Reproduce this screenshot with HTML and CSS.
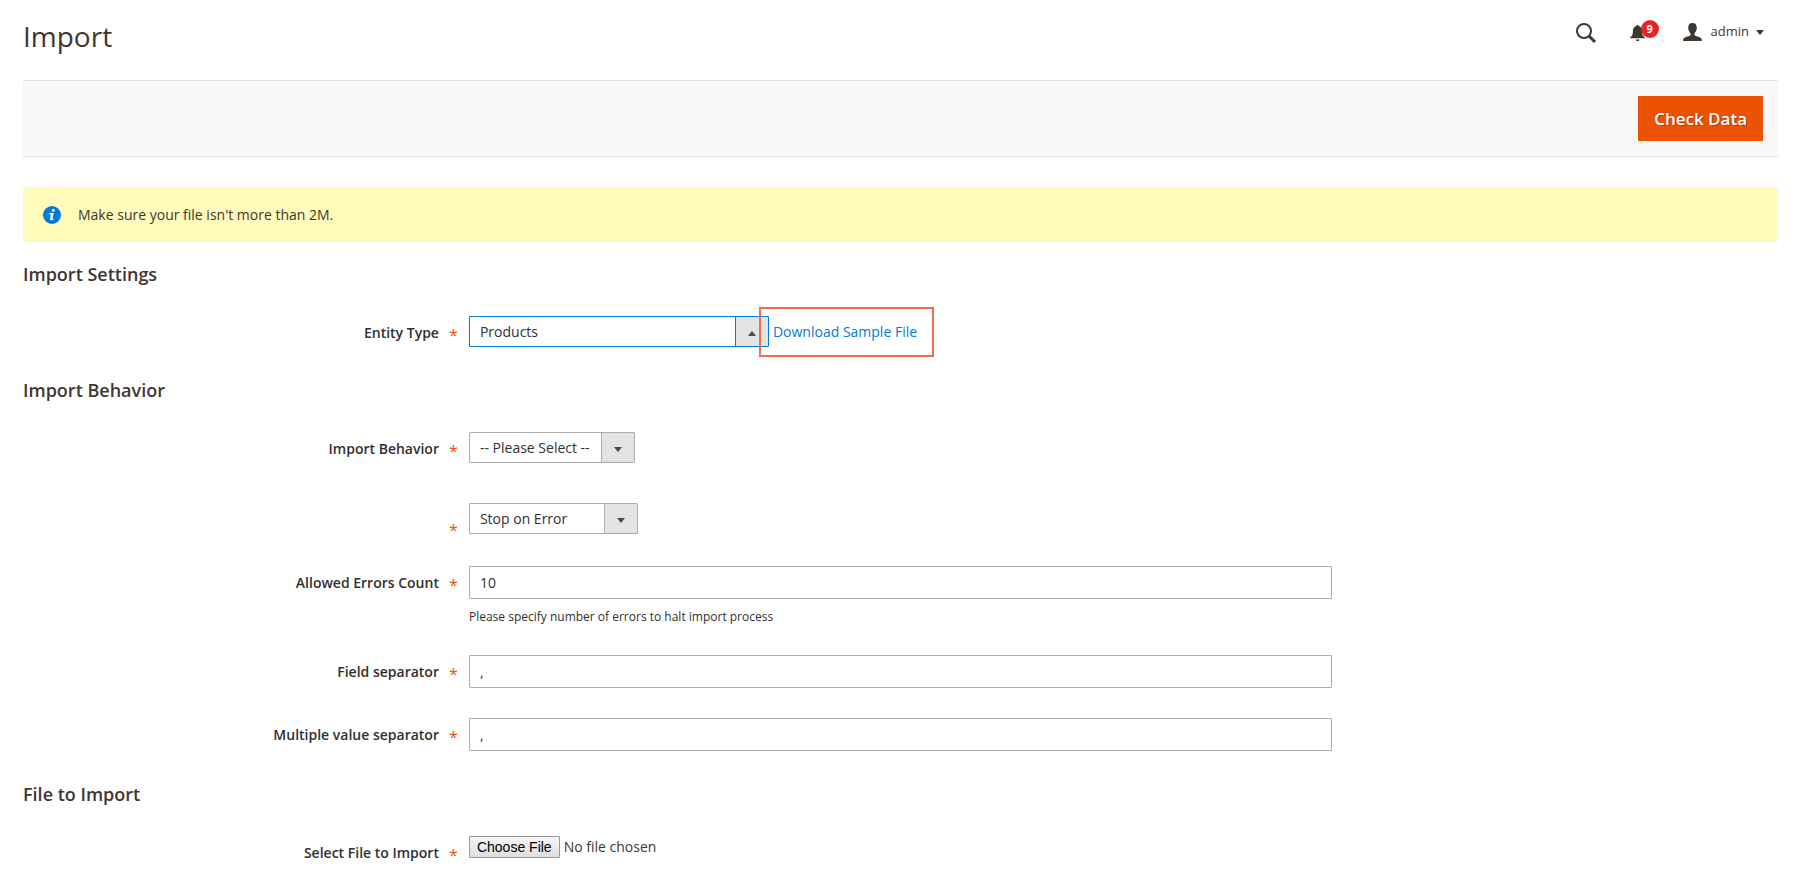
FILE: index.html
```html
<!DOCTYPE html>
<html lang="en">
<head>
<meta charset="utf-8">
<title>Import</title>
<link rel="stylesheet" href="styles.css">
</head>
<body>
<div class="page">
  <header class="page-header">
    <h1 class="page-title">Import</h1>
    <div class="header-tools">
      <button class="tool tool-search" type="button" aria-label="Search">
        <svg width="22" height="22" viewBox="0 0 22 22"><circle cx="9" cy="9" r="7" fill="none" stroke="currentColor" stroke-width="2"/><path d="M14 14l6 6" stroke="currentColor" stroke-width="3" fill="none"/></svg>
      </button>
      <button class="tool tool-bell" type="button" aria-label="Notifications">
        <svg width="16" height="18" viewBox="0 0 16 18"><path fill="currentColor" d="M6.500 1h2v1c2.300.5 3.600 2.300 3.600 4.800 0 3.800.7 5.400 2.700 6.400v1H.2v-1c2-1 2.700-2.600 2.700-6.400C2.900 4.300 4.200 2.500 6.500 2zM5.800 15.500h3.600c0 1-.8 1.700-1.800 1.700s-1.800-.7-1.800-1.700z"/></svg>
        <span class="badge">9</span>
      </button>
      <button class="tool tool-user" type="button">
        <svg width="19" height="18" viewBox="0 0 19 18"><path fill="currentColor" d="M9.500 0c2.700 0 4.200 1.500 4.200 4.200 0 .6.100 1.100.1 1.600 0 .9-.5 1.500-.8 2-.3 1.300-.9 2.100-1.500 2.700v1.400c.3.700 1.400 1 3 1.500 2.300.7 4.200 1.300 4.300 3.200V18H.2v-1.400c.1-1.900 2-2.500 4.300-3.200 1.600-.5 2.700-.8 3-1.500v-1.400C6.900 9.900 6.300 9.100 6 7.800c-.3-.5-.8-1.100-.8-2 0-.5.1-1 .1-1.600C5.300 1.500 6.800 0 9.500 0z"/></svg>
        <span class="user-name">admin</span>
        <svg width="8" height="5" viewBox="0 0 8 5"><path fill="currentColor" d="M0 0h8L4 5z"/></svg>
      </button>
    </div>
  </header>

  <div class="toolbar">
    <button class="btn-primary" type="submit" form="import-form">Check Data</button>
  </div>

  <div class="message">
    <svg width="18" height="18" viewBox="0 0 18 18"><circle cx="9" cy="9" r="9" fill="#007bdb"/><circle cx="10.300" cy="4.300" r="1.500" fill="#fff"/><path fill="#fff" d="M6.500 7h4.300l-1.400 5.500c0 .4.400.4 1.400 0l-.2 1.100c-1.600 1-3.800 1-3.600-.7L8 8.400H6.300z"/></svg>
    <p class="message-text">Make sure your file isn't more than 2M.</p>
  </div>

  <form id="import-form" class="form">
    <section class="section">
      <h2 class="legend">Import Settings</h2>
      <div class="field">
        <label class="label" for="entity">Entity Type</label>
        <div class="control control-inline">
          <span class="select select-entity is-open"><select id="entity"><option>Products</option></select></span>
          <span class="sample"><a class="sample-link" href="#">Download Sample File</a></span>
        </div>
      </div>
    </section>

    <section class="section">
      <h2 class="legend">Import Behavior</h2>
      <div class="field">
        <label class="label" for="behavior">Import Behavior</label>
        <div class="control"><span class="select"><select id="behavior"><option>-- Please Select --</option></select></span></div>
      </div>
      <div class="field field-unlabeled">
        <label class="label" for="strategy"></label>
        <div class="control"><span class="select select-strategy"><select id="strategy" aria-label="Validation strategy"><option>Stop on Error</option></select></span></div>
      </div>
      <div class="field">
        <label class="label" for="errors">Allowed Errors Count</label>
        <div class="control">
          <input class="text-input" id="errors" type="text" value="10">
          <p class="hint">Please specify number of errors to halt import process</p>
        </div>
      </div>
      <div class="field">
        <label class="label" for="separator">Field separator</label>
        <div class="control"><input class="text-input" id="separator" type="text" value=","></div>
      </div>
      <div class="field">
        <label class="label" for="multi-separator">Multiple value separator</label>
        <div class="control"><input class="text-input" id="multi-separator" type="text" value=","></div>
      </div>
    </section>

    <section class="section">
      <h2 class="legend">File to Import</h2>
      <div class="field">
        <label class="label" for="file">Select File to Import</label>
        <div class="control"><input class="file-input" id="file" type="file"></div>
      </div>
    </section>
  </form>
</div>
</body>
</html>
```

FILE: styles.css
```css
* {
  box-sizing: border-box;
}

body {
  margin: 0;
  background: #fff;
  color: #41362f;
  font-family: "Open Sans", "Noto Sans", sans-serif;
  font-size: 14px;
  line-height: 20px;
}

h1, h2, p {
  margin: 0;
}

button, input, select {
  font-family: inherit;
}

.page {
  padding: 0 28px 0 23px;
}

.page-header {
  display: flex;
  justify-content: space-between;
  align-items: flex-start;
  height: 80px;
  padding: 17px 14px 0 0;
}

.page-title {
  font-size: 28px;
  font-weight: 400;
  line-height: 38px;
}

.header-tools {
  display: flex;
  align-items: center;
  height: 32px;
}

.tool {
  display: flex;
  align-items: center;
  padding: 0;
  border: 0;
  background: none;
  color: #41362f;
  cursor: pointer;
}

.tool-search {
  margin-right: 33px;
}

.tool-bell {
  position: relative;
  margin-right: 37px;
}

.tool-user {
  padding-bottom: 2px;
}

.badge {
  position: absolute;
  top: -4px;
  left: 11px;
  width: 18px;
  height: 18px;
  border-radius: 50%;
  background: #e22626;
  color: #fff;
  font-size: 11px;
  font-weight: 700;
  line-height: 18px;
  text-align: center;
}

.user-name {
  margin: 0 7px 2px 9px;
  font-size: 13px;
  line-height: 18px;
}

.toolbar {
  display: flex;
  justify-content: flex-end;
  padding: 15px;
  border-top: 1px solid #e3e3e3;
  border-bottom: 1px solid #e3e3e3;
  background: #f8f8f8;
}

.btn-primary {
  padding: 12px 15px;
  border: 1px solid #eb5202;
  background: #eb5202;
  color: #fff;
  font-size: 17px;
  font-weight: 600;
  line-height: 19px;
  text-shadow: 1px 1px 0 rgba(0, 0, 0, 0.25);
  cursor: pointer;
}

.message {
  display: flex;
  align-items: center;
  gap: 17px;
  min-height: 55px;
  margin: 30px 0 20px;
  padding: 0 20px;
  background: #fffbbb;
}

.section {
  margin-bottom: 31px;
}

.legend {
  margin-bottom: 30px;
  font-size: 18px;
  font-weight: 600;
  line-height: 24px;
}

.field {
  display: grid;
  grid-template-columns: 31fr 60fr 31fr;
  margin-bottom: 30px;
}

.field-unlabeled {
  margin-bottom: 26px;
  padding-top: 10px;
}

.field-unlabeled .label {
  padding-top: 15px;
}

.label {
  display: flex;
  justify-content: flex-end;
  gap: 10px;
  padding: 7px 12px 0 0;
  color: #303030;
  font-weight: 600;
}

.label::after {
  content: "*";
  width: 8px;
  padding-top: 2px;
  color: #eb5202;
  font-size: 16px;
  font-weight: 400;
}

.control-inline {
  display: flex;
  align-items: center;
}

.select {
  position: relative;
  display: inline-block;
  width: 166px;
  height: 31px;
  border: 1px solid #adadad;
  border-radius: 1px;
  vertical-align: top;
}

.select select {
  width: 100%;
  height: 100%;
  padding: 0 42px 0 10px;
  border: 0;
  outline: 0;
  appearance: none;
  background: linear-gradient(#adadad, #adadad) right 32px top / 1px 100% no-repeat,
    linear-gradient(#e3e3e3, #e3e3e3) right / 32px 100% no-repeat, #fff;
  color: #303030;
  font-size: 14px;
}

.select::after {
  content: "";
  position: absolute;
  top: 14px;
  right: 12px;
  border: 4px solid transparent;
  border-top: 5px solid #514943;
  border-bottom: 0;
  pointer-events: none;
}

.select-strategy {
  width: 169px;
}

.select-entity {
  width: 300px;
}

.is-open {
  border-color: #007bdb;
}

.is-open select {
  background: linear-gradient(#007bdb, #007bdb) right 32px top / 1px 100% no-repeat,
    linear-gradient(#e3e3e3, #e3e3e3) right / 32px 100% no-repeat, #fff;
}

.is-open::after {
  border-top: 0;
  border-bottom: 5px solid #514943;
}

.sample {
  position: relative;
  margin-left: 4px;
}

.sample::before {
  content: "";
  position: absolute;
  inset: -15px -17px -15px -14px;
  border: 2px solid #f26c4f;
  pointer-events: none;
}

.sample-link {
  color: #007bdb;
  text-decoration: none;
}

.text-input {
  display: block;
  width: 100%;
  height: 33px;
  padding: 0 10px;
  border: 1px solid #adadad;
  border-radius: 1px;
  background: #fff;
  color: #303030;
  font-size: 14px;
}

.hint {
  margin-top: 10px;
  color: #303030;
  font-size: 12px;
  line-height: 16px;
}

.file-input {
  display: block;
  width: 100%;
  color: #41362f;
  font-size: 14px;
  line-height: 22px;
}

.file-input::file-selector-button {
  height: 22px;
  margin: 0 4px 0 0;
  padding: 0 7px;
  border: 1px solid #999;
  border-radius: 1px;
  background: linear-gradient(#f6f6f6, #dedede);
  color: #000;
  font-family: "Liberation Sans", Arial, sans-serif;
  font-size: 14px;
}
```
